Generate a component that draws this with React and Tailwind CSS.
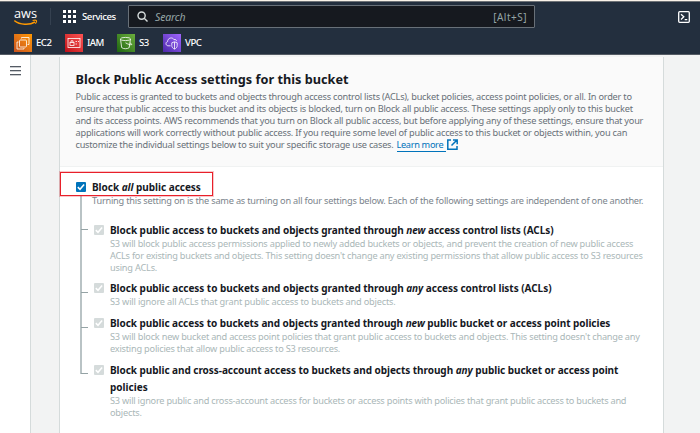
import React from "react";

function Line({ children, className = "" }) {
  return <div className={"whitespace-nowrap " + className}>{children}</div>;
}

function Waffle() {
  const p = [0, 5, 10];
  return (
    <svg className="ml-[14px] block shrink-0" width="13" height="13" viewBox="0 0 13 13" fill="#fff">
      {p.map((y) => p.map((x) => <rect key={x + "-" + y} x={x} y={y} width="3" height="3" />))}
    </svg>
  );
}

function AwsLogo() {
  return (
    <div className="relative h-[18px] w-[24px] shrink-0">
      <div className="absolute -top-[4px] left-0 font-['Open_Sans'] text-[12.8px] leading-[18px] font-medium text-white">aws</div>
      <svg className="absolute left-0 top-[11px]" width="24" height="8" viewBox="0 0 24 8" fill="none" stroke="#f90">
        <path d="M0.3 1.600C6 6.200 15.500 6.400 21 3" strokeWidth="1.500" />
        <path d="M18.600 1.600c1.600-.5 3.400-.5 3.800 0s-.1 1.900-1.200 3.100" strokeWidth="1.100" />
      </svg>
    </div>
  );
}

function Service({ label, bg, labelClass, children }) {
  return (
    <div className="flex items-center gap-[4px]">
      <div className={"h-[18px] w-[18px] shrink-0 " + bg}>
        <svg width="18" height="18" viewBox="0 0 18 18" fill="none" stroke="#fff" strokeWidth="0.8">
          {children}
        </svg>
      </div>
      <span className={"text-[9.6px] leading-[18px] text-white " + labelClass}>{label}</span>
    </div>
  );
}

function Check({ disabled }) {
  return (
    <div className={"mt-[3px] h-[10px] w-[10px] shrink-0 rounded-[1px] " + (disabled ? "bg-[#d5dbdb]" : "bg-[#0073bb]")}>
      <svg width="10" height="10" viewBox="0 0 10 10" fill="none" stroke="#fff" strokeWidth="1.5">
        <path d="M1.800 5.100l2.200 2.200 4.100-4.700" />
      </svg>
    </div>
  );
}

function Option({ top, children }) {
  return (
    <div className={"flex " + top}>
      <Check disabled />
      <div className="ml-[6.500px]">{children}</div>
    </div>
  );
}

const label = "text-[10px] leading-[16px] font-bold text-[#16191f] ";
const hint = "text-[9.2px] leading-[12px] text-[#aab7b8] ";

export default function App() {
  return (
    <div className="flex h-[433px] w-[700px] flex-col overflow-hidden bg-[#f2f3f3] font-['Noto_Sans','Open_Sans',sans-serif]">
      <header className="flex h-[55px] shrink-0 flex-col border-b border-[#545b64] bg-[#232f3e]">
        <div className="h-px shrink-0 bg-[#faf3e9]" />
        <div className="h-px shrink-0 bg-[#6f7377]" />
        <div className="flex h-[29px] items-center pl-[14px] pr-[9px]">
          <AwsLogo />
          <div className="ml-[12px] h-[17px] w-px bg-[#354150]" />
          <div className="-ml-[2px] flex items-center">
            <Waffle />
            <span className="ml-[6px] w-[46px] text-[9.6px] leading-[16px] tracking-[-0.45px] font-medium text-white">Services</span>
          </div>
          <div className="flex h-[23px] w-[407px] items-center rounded-[1px] border border-[#687078] bg-[#16191f] pl-[8px] pr-[7px]">
            <svg width="11" height="11" viewBox="0 0 11 11" fill="none" stroke="#d5dbdb" strokeWidth="1.4">
              <circle cx="4.600" cy="4.600" r="3.600" />
              <path d="M7.200 7.200l3.300 3.300" />
            </svg>
            <span className="ml-[7px] flex-1 text-[10.5px] italic leading-[16px] tracking-[-0.15px] text-[#95a5a6]">Search</span>
            <span className="text-[10px] leading-[16px] tracking-[0.5px] text-[#95a5a6]">[Alt+S]</span>
          </div>
          <svg className="ml-auto mr-px" width="12" height="12" viewBox="0 0 12 12" fill="none" stroke="#fff" strokeWidth="1.3">
            <rect x="0.700" y="0.700" width="10.600" height="10.600" rx="1" />
            <path d="M3 3.200l2.800 2.600L3 8.400M6.700 8.700h2.600" />
          </svg>
        </div>
        <div className="flex h-[23px] items-center pl-[14px] pt-[1px] font-medium">
          <Service label="EC2" bg="bg-linear-to-tr from-[#c8511b] to-[#f90]" labelClass="w-[29px] tracking-[-0.5px]">
            <rect x="5.500" y="6" width="7" height="7" rx="1" />
            <path d="M7.500 4.500V3.500h7.500v7h-1.500M4.500 8H3v7h7v-1" />
          </Service>
          <Service label="IAM" bg="bg-linear-to-tr from-[#bd0816] to-[#ff5252]" labelClass="w-[30px] tracking-[-0.6px]">
            <rect x="3" y="4.500" width="12" height="9" />
            <rect x="5" y="8.500" width="4" height="3" />
            <path d="M6 8.500V6.800h2v1.700M10.500 7.500h1.500M13 7.500h1M10.500 10h1.500" />
          </Service>
          <Service label="S3" bg="bg-linear-to-tr from-[#1b660f] to-[#6cae3e]" labelClass="w-[24px] tracking-[-0.6px]">
            <ellipse cx="8.500" cy="5" rx="5" ry="1.600" />
            <path d="M3.500 5l1.200 8.600c1.500 1.500 6 1.500 7.500 0L13.500 5M8.500 8.800c2.500 1.500 5 2.300 6.300 1.800-.2-1-1-1.400-1.700-1.600" />
          </Service>
          <Service label="VPC" bg="bg-linear-to-tr from-[#4d27aa] to-[#a166ff]" labelClass="tracking-[-0.5px]">
            <path d="M7.500 11.800H5C2.500 11.500 2.300 8.200 4.600 7.600 4.500 4 9.500 2.500 11 5.700c1.500-.6 2.500.2 2.500 1.400" />
            <path d="M11.500 7.800l2.700 1v2.700c0 1.800-1.200 3-2.700 3.600-1.500-.6-2.700-1.800-2.700-3.600V8.800zM11.500 8v7" />
          </Service>
        </div>
      </header>

      <div className="flex flex-1">
        <nav className="flex w-[31px] shrink-0 justify-center border-r border-[#d5dbdb] bg-white pt-[11px]">
          <svg width="11" height="10" viewBox="0 0 11 10" fill="#545b64">
            <rect y="0" width="11" height="1.300" />
            <rect y="4" width="11" height="1.300" />
            <rect y="8" width="11" height="1.300" />
          </svg>
        </nav>
        <main className="ml-[28px] mt-[2px] w-[605px] shrink-0 border-x border-[#d5dbdb] bg-white">
          <section className="h-[110px] border-b border-[#f0f2f2] bg-[#fafafa] pl-[15.500px] pt-[13px] text-[#687078]">
            <h2 className="whitespace-nowrap text-[12.7px] leading-[18px] font-bold tracking-[0.015px] text-[#16191f]">Block Public Access settings for this bucket</h2>
            <div className="pt-[3px] text-[9.2px] leading-[12px]">
              <Line className="tracking-[-0.227px]">Public access is granted to buckets and objects through access control lists (ACLs), bucket policies, access point policies, or all. In order to</Line>
              <Line className="tracking-[-0.214px]">ensure that public access to this bucket and its objects is blocked, turn on Block all public access. These settings apply only to this bucket</Line>
              <Line className="tracking-[-0.229px]">and its access points. AWS recommends that you turn on Block all public access, but before applying any of these settings, ensure that your</Line>
              <Line className="tracking-[-0.212px]">applications will work correctly without public access. If you require some level of public access to this bucket or objects within, you can</Line>
              <Line className="flex tracking-[-0.235px]">
                <span>customize the individual settings below to suit your specific storage use cases.</span>
                <a className="ml-[3px] h-[13px] w-[49px] border-b border-[#0073bb] tracking-[-0.32px] text-[#0073bb]">Learn more</a>
                <svg className="ml-[1px]" width="11" height="11" viewBox="0 0 11 11" fill="none" stroke="#0073bb" strokeWidth="1.500">
                  <path d="M4 1H0.800v9.200H10V7M6 1h4.200v4.200M10 1L4.500 6.500" />
                </svg>
              </Line>
            </div>
          </section>

          <section className="relative pl-[15.500px] pt-[12px]">
            <div className="absolute left-[20px] top-[29px] h-[178px] w-[2px] bg-[#b9c3c5]" />
            <div className="absolute left-[21px] top-[62px] h-px w-[7px] bg-[#95a3a5]" />
            <div className="absolute left-[21px] top-[125px] h-px w-[7px] bg-[#95a3a5]" />
            <div className="absolute left-[21px] top-[160px] h-px w-[7px] bg-[#95a3a5]" />
            <div className="absolute left-[21px] top-[206px] h-px w-[7px] bg-[#95a3a5]" />
            <div className="absolute left-0 top-[5px] h-[24px] w-[153px] border border-[#e8202a] shadow-[0_0_0_1px_rgba(232,32,42,0.25)]" />
            <div className="flex">
              <Check />
              <div className="ml-[6.500px]">
                <Line className={label + "tracking-[-0.03px]"}>Block <em>all</em> public access</Line>
                <Line className="relative text-[9.2px] leading-[12px] tracking-[-0.209px] text-[#7b848c]">Turning this setting on is the same as turning on all four settings below. Each of the following settings are independent of one another.</Line>
              </div>
            </div>
            <div className="pl-[18px]">
              <Option top="mt-[15px]">
                <Line className={label + "tracking-[-0.04px]"}>Block public access to buckets and objects granted through <em>new</em> access control lists (ACLs)</Line>
                <Line className={hint + "tracking-[-0.216px]"}>S3 will block public access permissions applied to newly added buckets or objects, and prevent the creation of new public access</Line>
                <Line className={hint + "tracking-[-0.233px]"}>ACLs for existing buckets and objects. This setting doesn't change any existing permissions that allow public access to S3 resources</Line>
                <Line className={hint + "tracking-[-0.2px]"}>using ACLs.</Line>
              </Option>
              <Option top="mt-[6.400px]">
                <Line className={label + "tracking-[-0.04px]"}>Block public access to buckets and objects granted through <em>any</em> access control lists (ACLs)</Line>
                <Line className={hint + "tracking-[-0.189px]"}>S3 will ignore all ACLs that grant public access to buckets and objects.</Line>
              </Option>
              <Option top="mt-[6.600px]">
                <Line className={label + "tracking-[-0.05px]"}>Block public access to buckets and objects granted through <em>new</em> public bucket or access point policies</Line>
                <Line className={hint + "tracking-[-0.214px]"}>S3 will block new bucket and access point policies that grant public access to buckets and objects. This setting doesn't change any</Line>
                <Line className={hint + "tracking-[-0.215px]"}>existing policies that allow public access to S3 resources.</Line>
              </Option>
              <Option top="mt-[7px]">
                <Line className={label + "tracking-[-0.05px]"}>Block public and cross-account access to buckets and objects through <em>any</em> public bucket or access point</Line>
                <Line className={label + "pt-[0.600px]"}>policies</Line>
                <Line className={hint + "tracking-[-0.228px]"}>S3 will ignore public and cross-account access for buckets or access points with policies that grant public access to buckets and</Line>
                <Line className={hint + "tracking-[-0.2px]"}>objects.</Line>
              </Option>
            </div>
          </section>
        </main>
      </div>
    </div>
  );
}
